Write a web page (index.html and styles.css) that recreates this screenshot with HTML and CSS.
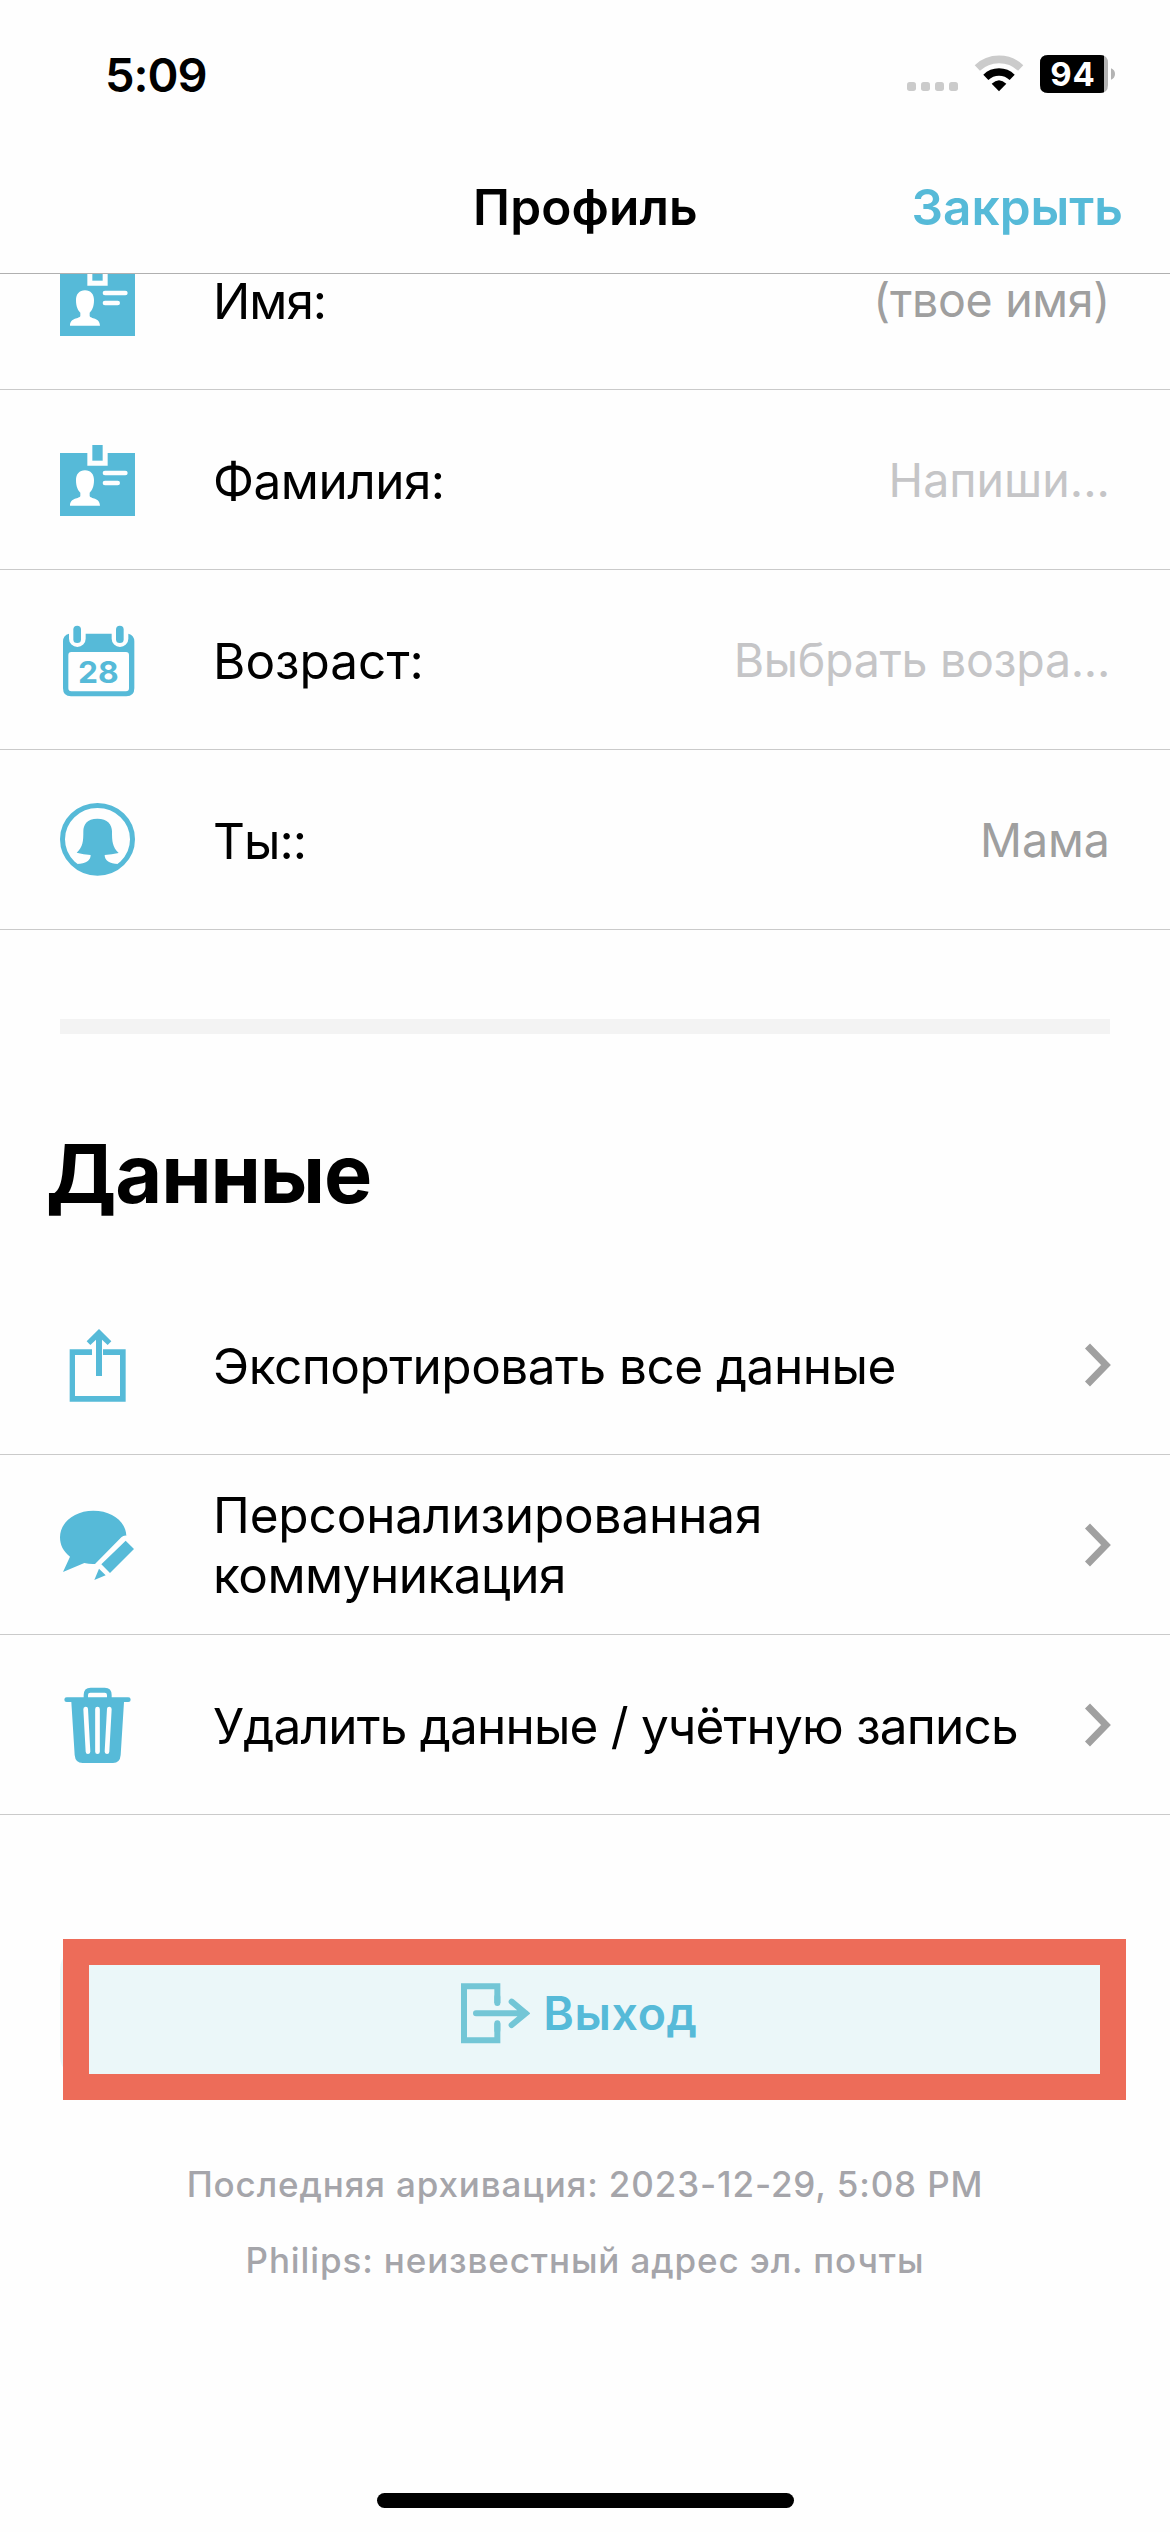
FILE: index.html
```html
<!DOCTYPE html>
<html lang="ru">
<head>
<meta charset="utf-8">
<title>Профиль</title>
<link rel="stylesheet" href="styles.css">
</head>
<body>
<div class="screen">
  <header class="header">
    <div class="status">
      <span class="time">5:09</span>
      <div class="indicators">
        <svg class="indicators-art" viewBox="81 72 627 120">
          <g fill="#cbcbcb">
            <rect x="81" y="156" width="27" height="27" rx="8"/><rect x="123" y="156" width="27" height="27" rx="8"/><rect x="165" y="156" width="27" height="27" rx="8"/><rect x="207" y="156" width="27" height="27" rx="8"/>
          </g>
          <path d="M292 114A95 95 0 0 1 422 114" fill="none" stroke="#cbcbcb" stroke-width="23"/>
          <path d="M317.500 142A57 57 0 0 1 396.500 142" fill="none" stroke="#000" stroke-width="22"/>
          <path d="M335 161Q357 140 379 161L357 184Z"/>
          <path d="M504 75H660Q684 75 684 99V165Q684 189 660 189H504Q480 189 480 165V99Q480 75 504 75Z" fill="#b3b3b3"/>
          <path d="M504 75H660Q667 75 672 77V187Q667 189 660 189H504Q480 189 480 165V99Q480 75 504 75Z"/>
          <path d="M693 115Q705 120 705 132T693 149Z" fill="#b3b3b3"/>
        </svg>
        <span class="battery-level">94</span>
      </div>
    </div>
    <nav class="navbar">
      <h1 class="title">Профиль</h1>
      <a class="close">Закрыть</a>
    </nav>
  </header>

  <main class="content">
    <section class="list profile">
      <div class="row">
        <svg class="icon" viewBox="60 546 228 228"><path d="M60 579H142V617H203V579H285V768H60Z"/><path d="M157 555H188V602H157Z"/><path fill="#fff" d="M135 631C152 631 162 643 162 660C162 680 156 692 149 698V708C151 717 180 712 180 737H90C90 712 119 717 121 708V698C114 692 108 680 108 660C108 643 118 631 135 631Z"/><path class="line" d="M195 639H256M195 669H233"/></svg>
        <span class="label tight">Имя:</span><span class="value narrow">(твое имя)</span>
      </div>
      <div class="row">
        <svg class="icon" viewBox="60 546 228 228"><path d="M60 579H142V617H203V579H285V768H60Z"/><path d="M157 555H188V602H157Z"/><path fill="#fff" d="M135 631C152 631 162 643 162 660C162 680 156 692 149 698V708C151 717 180 712 180 737H90C90 712 119 717 121 708V698C114 692 108 680 108 660C108 643 118 631 135 631Z"/><path class="line" d="M195 639H256M195 669H233"/></svg>
        <span class="label snug">Фамилия:</span><span class="value placeholder">Напиши...</span>
      </div>
      <div class="row">
        <svg class="icon" viewBox="60 66 228 228"><path fill-rule="evenodd" d="M87 101V116A25 25 0 0 0 137 116V101H215V116A25 25 0 0 0 265 116V101Q283 106 283 124V265Q283 289 259 289H93Q69 289 69 265V124Q69 106 87 101ZM94 156Q85 156 85 165V265Q85 274 94 274H258Q267 274 267 265V165Q267 156 258 156Z"/><rect x="100" y="77" width="23" height="52" rx="11.500"/><rect x="228" y="77" width="23" height="52" rx="11.500"/><text class="day" x="175" y="249" text-anchor="middle" textLength="122" lengthAdjust="spacingAndGlyphs">28</text></svg>
        <span class="label">Возраст:</span><span class="value placeholder narrow">Выбрать возра...</span>
      </div>
      <div class="row">
        <svg class="icon" viewBox="60 606 228 228"><ellipse cx="172.500" cy="718" rx="105" ry="101.500" fill="none" stroke="#56bad8" stroke-width="15"/><path d="M172 656C203 656 216 674 216 694C216 724 217 741 236 759Q215 764 194 765C194 782 209 791 234 792Q209 821 172 821T111 792C137 791 152 782 152 765Q131 764 110 758C129 741 130 724 130 694C130 674 141 656 172 656Z"/></svg>
        <span class="label tight">Ты::</span><span class="value">Мама</span>
      </div>
    </section>

    <hr class="divider">
    <h2 class="heading">Данные</h2>

    <section class="list">
      <div class="row">
        <svg class="icon" viewBox="60 51 228 228"><path d="M89 118H156V135H105V258H240V135H189V118H257V275H89Z"/><path d="M177 57L214 94L203 105L186 89V198H168V89L151 105L140 94Z"/></svg>
        <span class="label snug">Экспортировать все данные</span>
        <svg class="chevron" viewBox="0 0 28 44"><path d="M4.500 3L23 22L4.500 41"/></svg>
      </div>
      <div class="row">
        <svg class="icon" viewBox="60 591 228 228"><path d="M160 602C216 602 257 634 259 677Q250 676 244 682L165 762Q149 763 133 759L69 786L90 740C69 724 60 704 60 682C60 637 104 602 160 602Z"/><path d="M257 692L282 717L210 789L184 763ZM177 776L197 796L163 810Z"/></svg>
        <span class="label double">Персонализированная<br><span class="snug">коммуникация</span></span>
        <svg class="chevron" viewBox="0 0 28 44"><path d="M4.500 3L23 22L4.500 41"/></svg>
      </div>
      <div class="row">
        <svg class="icon" viewBox="60 51 228 228"><path fill-rule="evenodd" d="M131 82V75Q131 53 152 53H194Q215 53 215 75V82H265A7 7 0 0 1 265 96H252L242 255Q240 279 219 279H128Q106 279 104 255L94 96H80A7 7 0 0 1 80 82ZM144 82H201V75Q201 68 194 68H151Q144 68 144 75Z"/><path class="slat" d="M137 117L144 245M172.500 117V245M208 117L201 245"/></svg>
        <span class="label tighter">Удалить данные / учётную запись</span>
        <svg class="chevron" viewBox="0 0 28 44"><path d="M4.500 3L23 22L4.500 41"/></svg>
      </div>
    </section>

    <div class="logout">
      <svg class="logout-icon" viewBox="66 158 207 183"><path d="M175 218V168H75V330H175V279"/><path class="round" d="M175 200V218M175 279V300M111 249H260M218 214L260 249L218 284"/></svg>
      <span class="logout-text">Выход</span>
      <span class="highlight"></span>
    </div>

    <footer class="footer">
      <p class="note">Последняя архивация: 2023-12-29, 5:08 PM</p>
      <p class="note">Philips: неизвестный адрес эл. почты</p>
    </footer>
  </main>
  <div class="home-indicator"></div>
</div>
</body>
</html>
```
FILE: styles.css
```css
* { box-sizing: border-box; }

body {
  margin: 0;
  background: #fefefe;
  color: #000;
  font-family: "Inter", "Liberation Sans", sans-serif;
  line-height: 60px;
}

.screen {
  display: flex;
  flex-direction: column;
  width: 1170px;
  height: 2532px;
  overflow: hidden;
}

.header {
  height: 274px;
  border-bottom: 1px solid #b0b0b0;
}

.status {
  display: flex;
  justify-content: space-between;
  align-items: flex-start;
  height: 177px;
  padding: 45px 54px 0 105px;
}

.time {
  font-size: 47px;
  font-weight: 600;
  letter-spacing: -1px;
}

.indicators {
  position: relative;
  width: 209px;
  height: 40px;
  margin-top: 9px;
}

.indicators-art { display: block; width: 209px; height: 40px; }

.battery-level {
  position: absolute;
  left: 133px;
  top: 0;
  width: 66px;
  color: #fff;
  font-size: 33px;
  font-weight: 700;
  line-height: 40px;
  text-align: center;
  letter-spacing: 1px;
}

.navbar {
  display: grid;
  grid-template-columns: 1fr auto 1fr;
  padding: 0 47px 0 48px;
  font-size: 49.5px;
}

.title {
  grid-column: 2;
  margin: 0;
  font-size: inherit;
  font-weight: 600;
  letter-spacing: 0.16px;
}

.close {
  justify-self: end;
  color: #56bad8;
  font-weight: 600;
}

.content {
  flex: 1;
  overflow: hidden;
}

/* The list is scrolled part of the way under the header. */
.profile { margin-top: -64px; }

.row {
  display: flex;
  align-items: center;
  height: 180px;
  padding: 1px 60px 0;
  border-bottom: 1px solid #cacaca;
}

.icon {
  flex: none;
  width: 76px;
  height: 76px;
  margin-right: 77px;
  fill: #56bad8;
}

.icon .line, .icon .slat {
  fill: none;
  stroke: #fefefe;
  stroke-width: 14;
  stroke-linecap: round;
}

.day {
  font-family: "Inter", sans-serif;
  font-size: 90px;
  font-weight: 700;
}

.label {
  flex: 1;
  padding-top: 2px;
  font-size: 49.5px;
  line-height: 48px;
  white-space: nowrap;
}

.double { padding-top: 0; line-height: 60px; letter-spacing: -0.14px; }
.snug { letter-spacing: -0.5px; }
.tight { letter-spacing: -1px; }
.tighter { letter-spacing: -0.8px; }

.value {
  color: #9f9f9f;
  font-size: 46.5px;
  line-height: 48px;
  white-space: nowrap;
}

.placeholder { color: #c5c5c7; }
.narrow { letter-spacing: -0.3px; }

.chevron {
  flex: none;
  width: 28px;
  height: 44px;
  margin-right: -1px;
  fill: none;
  stroke: #a0a0a0;
  stroke-width: 7;
}

.divider {
  height: 15px;
  margin: 89px 60px 90px;
  border: 0;
  background: #f3f3f3;
}

.heading {
  height: 151px;
  margin: 0 46px;
  font-size: 81px;
  font-weight: 700;
  line-height: 100px;
  letter-spacing: -1.1px;
}

.logout {
  position: relative;
  display: flex;
  align-items: center;
  justify-content: center;
  gap: 13px;
  height: 134px;
  margin: 131px 60px 0;
  padding-right: 11px;
  border-radius: 24px;
  background: #ebf7f9;
}

.logout-icon {
  width: 69px;
  height: 61px;
  fill: none;
  stroke: #73c6d6;
  stroke-width: 18;
}

.logout-icon .round { stroke-linecap: round; }

.logout-text {
  color: #56bad8;
  font-size: 46.5px;
  font-weight: 600;
  letter-spacing: 0.6px;
}

.highlight {
  position: absolute;
  left: 3px;
  top: -7px;
  width: 1063px;
  height: 161px;
  border: 26px solid #ed6c59;
}

.footer {
  display: grid;
  gap: 16px;
  padding-top: 74px;
  text-align: center;
}

.note {
  margin: 0;
  color: #a5a5aa;
  font-size: 35px;
  font-weight: 500;
  letter-spacing: 0.87px;
}

.home-indicator {
  align-self: center;
  width: 417px;
  height: 15px;
  margin-bottom: 24px;
  border-radius: 8px;
  background: #000;
}
```
